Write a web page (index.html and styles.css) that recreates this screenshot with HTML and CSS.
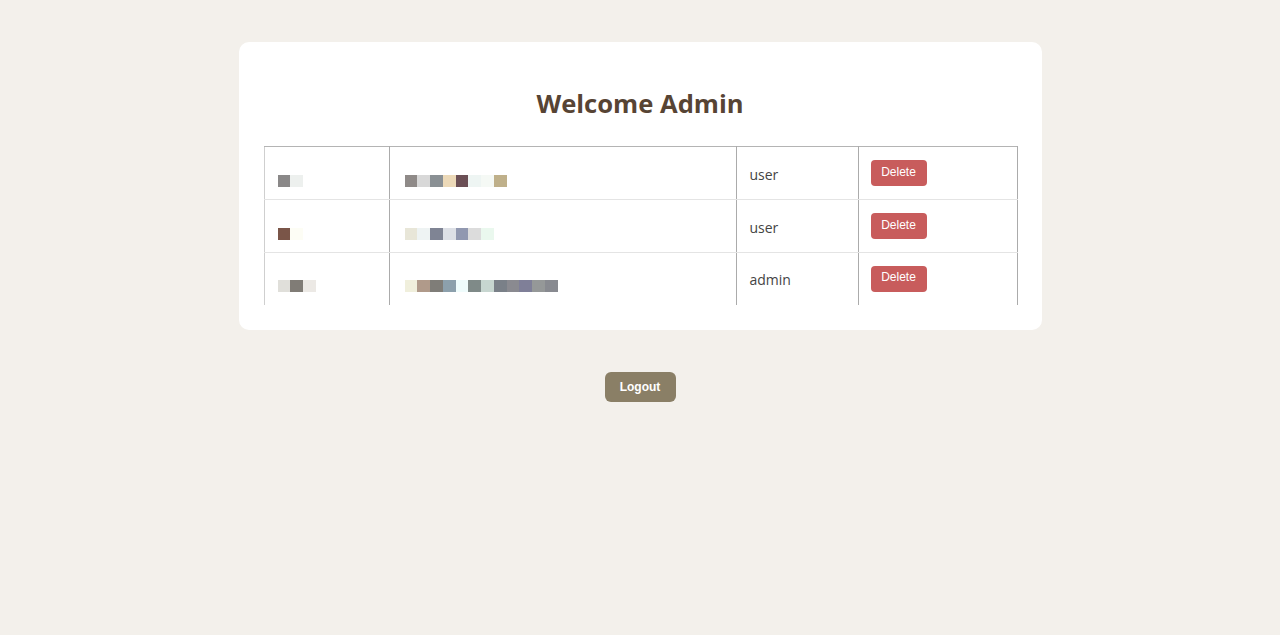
FILE: index.html
```html
<!DOCTYPE html>
<html>
<head>
<meta charset="utf-8">
<title>Admin</title>
<link rel="stylesheet" href="styles.css">
</head>
<body>
<main class="page">
  <section class="card">
    <h1 class="title">Welcome Admin</h1>
    <table class="users">
      <colgroup>
        <col class="c-name"><col class="c-email"><col class="c-role"><col class="c-act">
      </colgroup>
      <tbody>
        <tr>
          <td><span class="px"><i class="p" style="background:#8a8888"></i><i class="p" style="background:#edf0ee"></i></span></td>
          <td><span class="px"><i class="p" style="background:#8f8a88"></i><i class="p" style="background:#d8d8d8"></i><i class="p" style="background:#8a9094"></i><i class="p" style="background:#ecd9b8"></i><i class="p" style="background:#6b4f55"></i><i class="p" style="background:#eef5f3"></i><i class="p" style="background:#f5f9f5"></i><i class="p" style="background:#bfb08a"></i></span></td>
          <td class="role">user</td>
          <td><button class="del">Delete</button></td>
        </tr>
        <tr>
          <td><span class="px"><i class="p" style="background:#7a5548"></i><i class="p" style="background:#fdfdf5"></i></span></td>
          <td><span class="px"><i class="p" style="background:#e8e6d8"></i><i class="p" style="background:#eef3f3"></i><i class="p" style="background:#7f8494"></i><i class="p" style="background:#dde0e6"></i><i class="p" style="background:#9198b0"></i><i class="p" style="background:#dcdcdc"></i><i class="p" style="background:#eaf8ee"></i></span></td>
          <td class="role">user</td>
          <td><button class="del">Delete</button></td>
        </tr>
        <tr>
          <td><span class="px"><i class="p" style="background:#e0dfda"></i><i class="p" style="background:#807c76"></i><i class="p" style="background:#ece9e5"></i></span></td>
          <td><span class="px"><i class="p" style="background:#f0efdc"></i><i class="p" style="background:#b09a8a"></i><i class="p" style="background:#7f7d78"></i><i class="p" style="background:#8ca0ac"></i><i class="p" style="background:#effcfc"></i><i class="p" style="background:#7f8a88"></i><i class="p" style="background:#c7d6d0"></i><i class="p" style="background:#7a8088"></i><i class="p" style="background:#8a8a90"></i><i class="p" style="background:#7f7f98"></i><i class="p" style="background:#959898"></i><i class="p" style="background:#888a90"></i></span></td>
          <td class="role">admin</td>
          <td><button class="del">Delete</button></td>
        </tr>
      </tbody>
    </table>
  </section>
  <button class="logout">Logout</button>
</main>
</body>
</html>
```

FILE: styles.css
```css
* { box-sizing: border-box; }
html, body { margin: 0; padding: 0; }
body {
  background: #f3f0eb;
  font-family: "Open Sans", "Noto Sans", sans-serif;
  min-height: 635px;
}
.page {
  display: flex;
  flex-direction: column;
  align-items: center;
  padding-top: 42px;
}
.card {
  width: 803px;
  background: #ffffff;
  border-radius: 10px;
  padding: 20px 25px 25px;
}
.title {
  margin: 25px 0 25px;
  text-align: center;
  font-size: 25.6px;
  line-height: 34px;
  font-weight: 700;
  color: #574434;
}
.users {
  width: 753px;
  border-collapse: collapse;
  table-layout: fixed;
}
.c-name { width: 125px; }
.c-email { width: 347px; }
.c-role { width: 122px; }
.c-act { width: 159px; }
.users td {
  height: 53px;
  padding: 0 12px;
  border-left: 1px solid #ababab;
  border-right: 1px solid #ababab;
  border-bottom: 1px solid #e4e4e4;
  vertical-align: middle;
  font-size: 14px;
  color: #444;
}
.users tr:first-child td { border-top: 1px solid #b4b4b4; }
.users tr:last-child td { border-bottom: none; height: 52px; }
.users td:first-child { border-left-color: #cfcfcf; padding-left: 13px; }
.users td:nth-child(2) { padding-left: 15px; }
.px {
  display: flex;
  padding-top: 15px;
}
.p {
  display: block;
  width: 12.75px;
  height: 12px;
}
.users td.role { padding-left: 13px; padding-top: 2px; }
.del {
  display: block;
  width: 56px;
  height: 26px;
  padding: 0 0 3px;
  border: none;
  border-radius: 4px;
  background: #c85c5c;
  color: #fff;
  font-family: "Liberation Sans", Arial, sans-serif;
  font-size: 12px;
}
.logout {
  margin-top: 42px;
  width: 71px;
  height: 30px;
  border: none;
  border-radius: 6px;
  background: #8a7f66;
  color: #fff;
  font-family: "Liberation Sans", Arial, sans-serif;
  font-weight: 700;
  font-size: 12px;
}
```
